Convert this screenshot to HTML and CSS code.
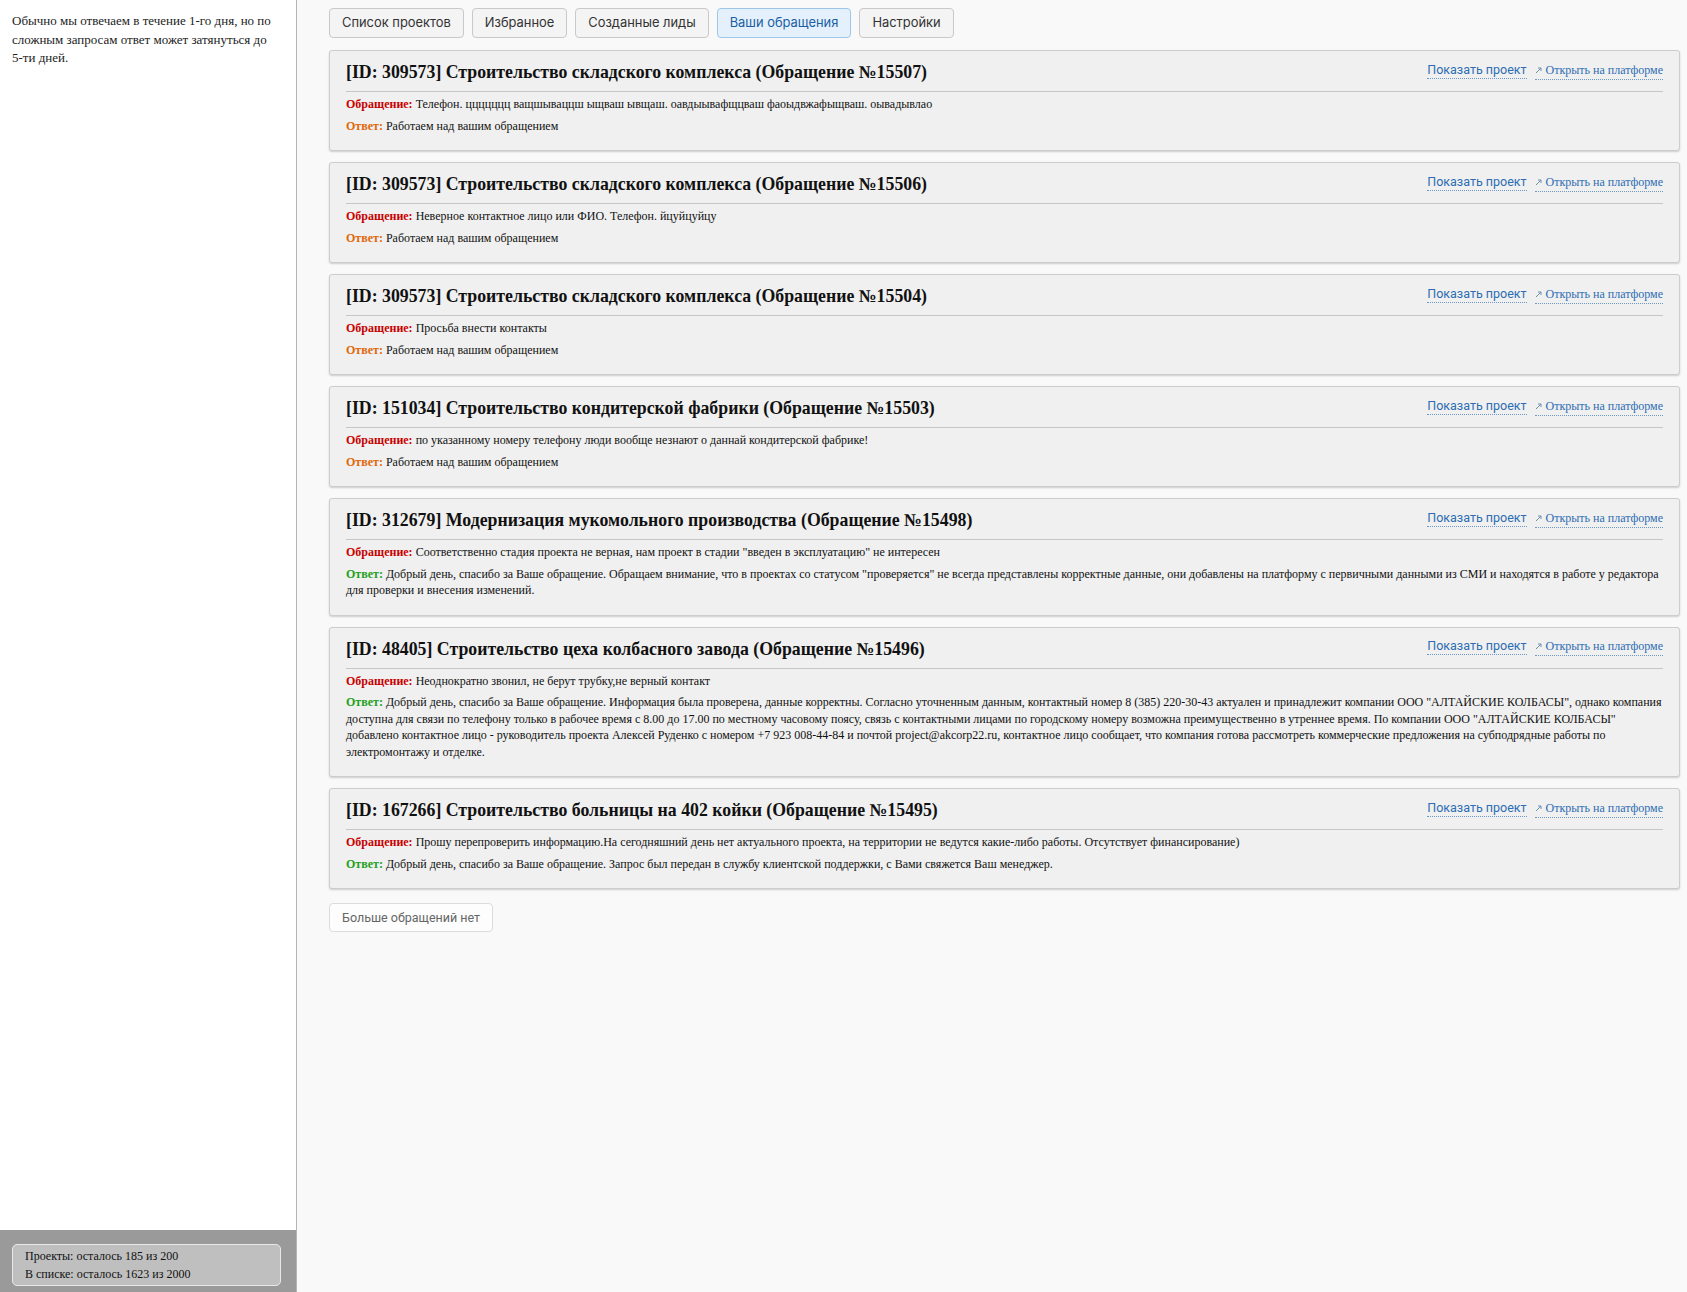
FILE: index.html
```html
<!DOCTYPE html>
<html lang="ru">
<head>
  <meta charset="UTF-8" />
  <title>Ваши обращения</title>
  <link rel="stylesheet" href="styles.css">
</head>
<body>

  <aside class="sidebar">
    <p class="sidebar-note">Обычно мы отвечаем в течение 1-го дня, но по сложным запросам ответ может затянуться до 5-ти дней.</p>
    <div class="limits">
      <div class="limits-box">
        <div>Проекты: осталось 185 из 200</div>
        <div>В списке: осталось 1623 из 2000</div>
      </div>
    </div>
  </aside>

  <main class="main">
    <nav class="tabs">
      <a class="tab" href="#">Список проектов</a>
      <a class="tab" href="#">Избранное</a>
      <a class="tab" href="#">Созданные лиды</a>
      <a class="tab active" href="#">Ваши обращения</a>
      <a class="tab" href="#">Настройки</a>
    </nav>

    <div class="card">
      <div class="card-head">
        <h2>[ID: 309573] Строительство складского комплекса (Обращение №15507)</h2>
        <div class="card-links">
          <a class="show-link" href="#">Показать проект</a>
          <a class="open-link" href="#"><svg width="7" height="7" viewBox="0 0 7 7"><path d="M1 6 L6 1 M3 1 H6 V4" fill="none" stroke="#6f8fb3" stroke-width="1"/></svg><span>Открыть на платформе</span></a>
        </div>
      </div>
      <div class="card-body">
        <p class="msg"><b class="q">Обращение:</b> Телефон. ццццццц ващшываццш ыщваш ывщаш. оавдыывафщцваш фаоыдвжафыщваш. оывадывлао</p>
        <p class="msg"><b class="a-wait">Ответ:</b> Работаем над вашим обращением</p>
      </div>
    </div>

    <div class="card">
      <div class="card-head">
        <h2>[ID: 309573] Строительство складского комплекса (Обращение №15506)</h2>
        <div class="card-links">
          <a class="show-link" href="#">Показать проект</a>
          <a class="open-link" href="#"><svg width="7" height="7" viewBox="0 0 7 7"><path d="M1 6 L6 1 M3 1 H6 V4" fill="none" stroke="#6f8fb3" stroke-width="1"/></svg><span>Открыть на платформе</span></a>
        </div>
      </div>
      <div class="card-body">
        <p class="msg"><b class="q">Обращение:</b> Неверное контактное лицо или ФИО. Телефон. йцуйцуйцу</p>
        <p class="msg"><b class="a-wait">Ответ:</b> Работаем над вашим обращением</p>
      </div>
    </div>

    <div class="card">
      <div class="card-head">
        <h2>[ID: 309573] Строительство складского комплекса (Обращение №15504)</h2>
        <div class="card-links">
          <a class="show-link" href="#">Показать проект</a>
          <a class="open-link" href="#"><svg width="7" height="7" viewBox="0 0 7 7"><path d="M1 6 L6 1 M3 1 H6 V4" fill="none" stroke="#6f8fb3" stroke-width="1"/></svg><span>Открыть на платформе</span></a>
        </div>
      </div>
      <div class="card-body">
        <p class="msg"><b class="q">Обращение:</b> Просьба внести контакты</p>
        <p class="msg"><b class="a-wait">Ответ:</b> Работаем над вашим обращением</p>
      </div>
    </div>

    <div class="card">
      <div class="card-head">
        <h2>[ID: 151034] Строительство кондитерской фабрики (Обращение №15503)</h2>
        <div class="card-links">
          <a class="show-link" href="#">Показать проект</a>
          <a class="open-link" href="#"><svg width="7" height="7" viewBox="0 0 7 7"><path d="M1 6 L6 1 M3 1 H6 V4" fill="none" stroke="#6f8fb3" stroke-width="1"/></svg><span>Открыть на платформе</span></a>
        </div>
      </div>
      <div class="card-body">
        <p class="msg"><b class="q">Обращение:</b> по указанному номеру телефону люди вообще незнают о даннай кондитерской фабрике!</p>
        <p class="msg"><b class="a-wait">Ответ:</b> Работаем над вашим обращением</p>
      </div>
    </div>

    <div class="card">
      <div class="card-head">
        <h2>[ID: 312679] Модернизация мукомольного производства (Обращение №15498)</h2>
        <div class="card-links">
          <a class="show-link" href="#">Показать проект</a>
          <a class="open-link" href="#"><svg width="7" height="7" viewBox="0 0 7 7"><path d="M1 6 L6 1 M3 1 H6 V4" fill="none" stroke="#6f8fb3" stroke-width="1"/></svg><span>Открыть на платформе</span></a>
        </div>
      </div>
      <div class="card-body">
        <p class="msg"><b class="q">Обращение:</b> Соответственно стадия проекта не верная, нам проект в стадии "введен в эксплуатацию" не интересен</p>
        <p class="msg"><b class="a-done">Ответ:</b> Добрый день, спасибо за Ваше обращение. Обращаем внимание, что в проектах со статусом "проверяется" не всегда представлены корректные данные, они добавлены на платформу с первичными данными из СМИ и находятся в работе у редактора для проверки и внесения изменений.</p>
      </div>
    </div>

    <div class="card">
      <div class="card-head">
        <h2>[ID: 48405] Строительство цеха колбасного завода (Обращение №15496)</h2>
        <div class="card-links">
          <a class="show-link" href="#">Показать проект</a>
          <a class="open-link" href="#"><svg width="7" height="7" viewBox="0 0 7 7"><path d="M1 6 L6 1 M3 1 H6 V4" fill="none" stroke="#6f8fb3" stroke-width="1"/></svg><span>Открыть на платформе</span></a>
        </div>
      </div>
      <div class="card-body">
        <p class="msg"><b class="q">Обращение:</b> Неоднократно звонил, не берут трубку,не верный контакт</p>
        <p class="msg"><b class="a-done">Ответ:</b> Добрый день, спасибо за Ваше обращение. Информация была проверена, данные корректны. Согласно уточненным данным, контактный номер 8 (385) 220-30-43 актуален и принадлежит компании ООО "АЛТАЙСКИЕ КОЛБАСЫ", однако компания доступна для связи по телефону только в рабочее время с 8.00 до 17.00 по местному часовому поясу, связь с контактными лицами по городскому номеру возможна преимущественно в утреннее время. По компании ООО "АЛТАЙСКИЕ КОЛБАСЫ" добавлено контактное лицо - руководитель проекта Алексей Руденко с номером +7 923 008-44-84 и почтой project@akcorp22.ru, контактное лицо сообщает, что компания готова рассмотреть коммерческие предложения на субподрядные работы по электромонтажу и отделке.</p>
      </div>
    </div>

    <div class="card">
      <div class="card-head">
        <h2>[ID: 167266] Строительство больницы на 402 койки (Обращение №15495)</h2>
        <div class="card-links">
          <a class="show-link" href="#">Показать проект</a>
          <a class="open-link" href="#"><svg width="7" height="7" viewBox="0 0 7 7"><path d="M1 6 L6 1 M3 1 H6 V4" fill="none" stroke="#6f8fb3" stroke-width="1"/></svg><span>Открыть на платформе</span></a>
        </div>
      </div>
      <div class="card-body">
        <p class="msg"><b class="q">Обращение:</b> Прошу перепроверить информацию.На сегодняшний день нет актуального проекта, на территории не ведутся какие-либо работы. Отсутствует финансирование)</p>
        <p class="msg"><b class="a-done">Ответ:</b> Добрый день, спасибо за Ваше обращение. Запрос был передан в службу клиентской поддержки, с Вами свяжется Ваш менеджер.</p>
      </div>
    </div>

    <button class="more-btn">Больше обращений нет</button>
  </main>

</body>
</html>
```

FILE: styles.css
```css
* { margin: 0; padding: 0; box-sizing: border-box; }

body {
  font-family: "Liberation Serif", "Times New Roman", serif;
  background: #f9f9f9;
  color: #111;
  display: flex;
  min-height: 100vh;
}

/* left column */
.sidebar {
  width: 297px;
  flex-shrink: 0;
  height: 100vh;
  background: #fff;
  border-right: 1px solid #b4b4b4;
  display: flex;
  flex-direction: column;
}

.sidebar-note {
  padding: 12px 18px 12px 12px;
  font-size: 13px;
  line-height: 18.5px;
  color: #222;
}

.limits {
  margin-top: auto;
  background: #9a9a9a;
  padding: 14px 15px 6px 12px;
  height: 62px;
}

.limits-box {
  background: #bfbfbf;
  border: 1px solid #e8e8e8;
  border-radius: 5px;
  padding: 2px 12px;
  font-size: 12px;
  line-height: 18px;
  color: #111;
}

/* right column */
.main {
  flex: 1;
  padding: 8px 7px 30px 32px;
}

.tabs {
  display: flex;
  gap: 8px;
  margin-bottom: 12px;
}

.tab {
  font-family: Inter, Roboto, "Liberation Sans", sans-serif;
  font-size: 12.9px;
  color: #333;
  text-decoration: none;
  height: 30px;
  line-height: 28px;
  padding: 0 12px;
  background: #f4f4f4;
  border: 1px solid #c9c9c9;
  border-radius: 4px;
}

.tab.active {
  background: #e4f1fc;
  border-color: #9cc6ea;
  color: #1b5ea3;
}

.card {
  background: #f0f0f0;
  border: 1px solid #cdcdcd;
  border-radius: 3px;
  box-shadow: 0 1px 2px rgba(0, 0, 0, 0.18);
  padding: 9px 16px 16px 16px;
  margin-bottom: 11px;
}

.card-head {
  display: flex;
  justify-content: space-between;
  align-items: center;
  padding-bottom: 7px;
  border-bottom: 1px solid #c6c6c6;
}

.card-head h2 {
  font-size: 17.8px;
  line-height: 24px;
  font-weight: bold;
  color: #111;
}

.card-links {
  display: flex;
  align-items: baseline;
  gap: 8px;
  margin-top: -3px;
}

.show-link {
  font-family: Roboto, "Liberation Sans", sans-serif;
  font-size: 12.5px;
  color: #2c6db3;
  text-decoration: none;
  border-bottom: 1px dotted #6b97c9;
  padding-bottom: 1px;
}

.open-link {
  font-size: 12px;
  color: #2c6db3;
  text-decoration: none;
  border-bottom: 1px dotted #6b97c9;
  padding-bottom: 1px;
}

.open-link svg {
  margin-right: 4px;
}

.card-body {
  padding-top: 4px;
}

.msg {
  font-size: 12px;
  line-height: 16.5px;
  margin-top: 5px;
}

.msg:first-child {
  margin-top: 0;
}

.q { color: #c80000; }
.a-wait { color: #e0680a; }
.a-done { color: #23a020; }

.more-btn {
  font-family: Roboto, "Liberation Sans", sans-serif;
  font-size: 12.5px;
  color: #666;
  background: #fdfdfd;
  border: 1px solid #dcdcdc;
  border-radius: 4px;
  height: 29px;
  padding: 0 12px;
  margin-top: 3px;
}
```
